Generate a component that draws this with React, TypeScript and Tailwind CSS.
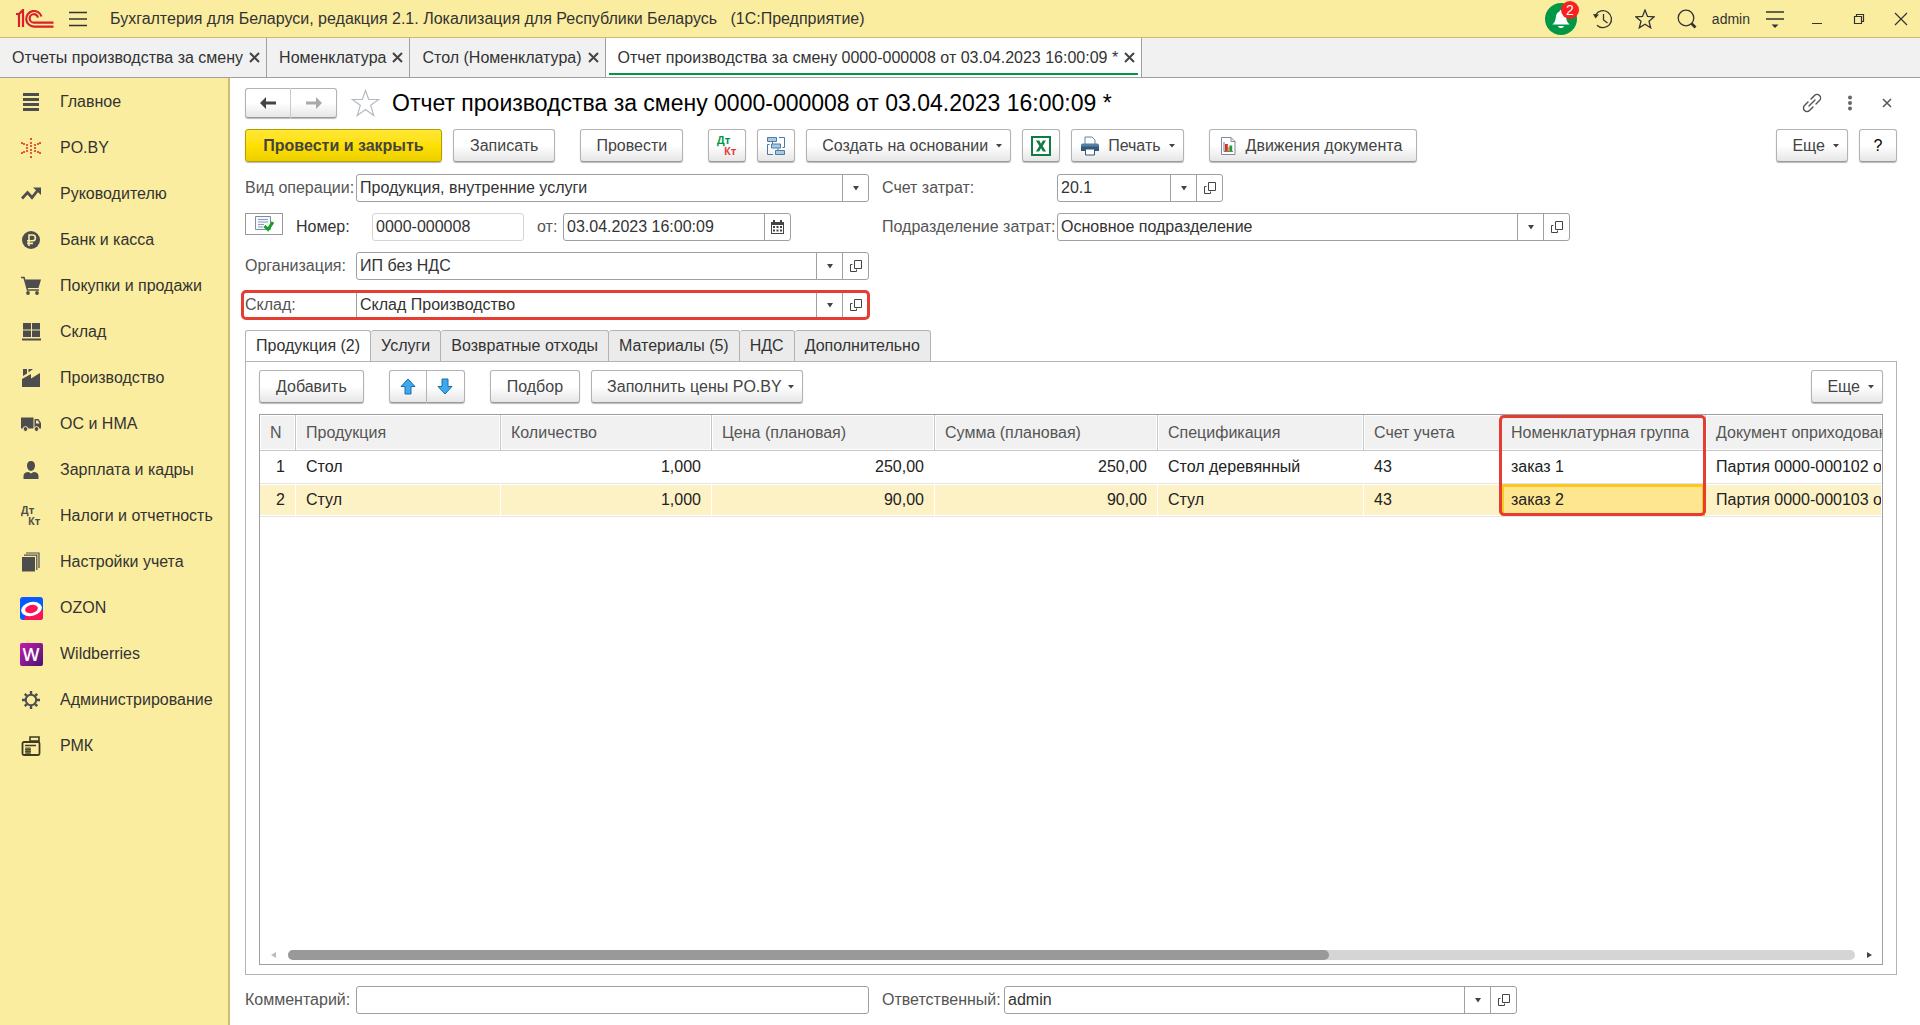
import { useState, type ReactNode } from "react";

const windowTabs = [
  "Отчеты производства за смену",
  "Номенклатура",
  "Стол (Номенклатура)",
  "Отчет производства за смену 0000-000008 от 03.04.2023 16:00:09 *",
];

const docTabs = [
  "Продукция (2)",
  "Услуги",
  "Возвратные отходы",
  "Материалы (5)",
  "НДС",
  "Дополнительно",
];

const rows = [
  {
    n: 1,
    product: "Стол",
    qty: "1,000",
    price: "250,00",
    sum: "250,00",
    spec: "Стол деревянный",
    account: "43",
    group: "заказ 1",
    doc: "Партия 0000-000102 от 03.04.2023",
  },
  {
    n: 2,
    product: "Стул",
    qty: "1,000",
    price: "90,00",
    sum: "90,00",
    spec: "Стул",
    account: "43",
    group: "заказ 2",
    doc: "Партия 0000-000103 от 03.04.2023",
  },
];

function Svg({ children }: { children: ReactNode }) {
  return (
    <svg width="20" height="20" viewBox="0 0 20 20" fill="none" aria-hidden>
      {children}
    </svg>
  );
}

function Logo() {
  return (
    <svg width="38" height="20" viewBox="0 0 38 20" fill="none" stroke="#d9202a" strokeWidth="2.2" aria-hidden>
      <path d="M0 5h3v13M3 5l4-4v17" />
      <path d="M25.500 7.500A7.800 7.800 0 1 0 18 17.600h19.500" />
      <path d="M22 8.600A4.200 4.200 0 1 0 18 13.600h19.500" />
    </svg>
  );
}

function DtKt({ dt, kt }: { dt: string; kt: string }) {
  return (
    <svg
      width="22"
      height="22"
      viewBox="0 0 22 22"
      className="overflow-visible font-['Open_Sans',sans-serif]"
      fontSize="10"
      fontWeight="700"
      aria-hidden
    >
      <text x="1" y="9" fill={dt}>Дт</text>
      <text x="8" y="20" fill={kt}>Кт</text>
    </svg>
  );
}

const poDots = [
  [10, 1], [10, 5], [10, 8], [10, 12], [10, 15], [10, 19], [1, 5], [19, 5], [1, 15], [19, 15],
  [6, 7], [14, 7], [6, 10], [14, 10], [6, 13], [14, 13], [3, 14], [17, 14], [3, 6], [17, 6],
];

const sections: { label: string; icon: ReactNode }[] = [
  {
    label: "Главное",
    icon: (
      <Svg>
        <path d="M2 2.5h16M2 7.5h16M2 12.5h16M2 17.5h16" stroke="#4d4d4d" strokeWidth="2.8" />
      </Svg>
    ),
  },
  {
    label: "PO.BY",
    icon: (
      <Svg>
        {poDots.map(([x, y]) => (
          <circle key={`${x}-${y}`} cx={x} cy={y} r="1.1" fill="#dd3a1d" />
        ))}
      </Svg>
    ),
  },
  {
    label: "Руководителю",
    icon: (
      <Svg>
        <path d="M1 14.5l5.5-6 4.5 5 6-7.5" stroke="#4d4d4d" strokeWidth="2.8" />
        <path d="M12 3.5h8V11z" fill="#4d4d4d" />
      </Svg>
    ),
  },
  {
    label: "Банк и касса",
    icon: (
      <Svg>
        <circle cx="10" cy="10" r="9" fill="#4d4d4d" />
        <path d="M8 16V5h3.5a2.8 2.8 0 0 1 0 5.8H6M6 13.4h6" stroke="#fbed9f" strokeWidth="1.6" />
      </Svg>
    ),
  },
  {
    label: "Покупки и продажи",
    icon: (
      <Svg>
        <path d="M0 1.5h3L6.5 14H18" stroke="#4d4d4d" strokeWidth="1.5" />
        <path d="M4 3.5h16L17.500 12H6z" fill="#4d4d4d" />
        <circle cx="7" cy="17" r="1.9" fill="#4d4d4d" />
        <circle cx="16" cy="17" r="1.9" fill="#4d4d4d" />
      </Svg>
    ),
  },
  {
    label: "Склад",
    icon: (
      <Svg>
        <path d="M2 1h8v6.500H2zM11 1h8v6.500h-8zM2 8.500h8V15H2zM11 8.500h8V15h-8zM1 16.500h19v2H1z" fill="#4d4d4d" />
      </Svg>
    ),
  },
  {
    label: "Производство",
    icon: (
      <Svg>
        <path d="M1 19v-8l9-5v4.500L19 5v14zM2 1h4v4.500L2 8zM7.500 1H12L7.500 4.500z" fill="#4d4d4d" />
      </Svg>
    ),
  },
  {
    label: "ОС и НМА",
    icon: (
      <Svg>
        <path d="M0 3.500h12.500v11H0zM13.500 5h4l2.500 4v5.500h-6.500z" fill="#4d4d4d" />
        <path d="M15 6.500h2l1.500 3H15z" fill="#fbed9f" />
        <circle cx="4.500" cy="15" r="2.400" fill="#4d4d4d" stroke="#fbed9f" />
        <circle cx="15.500" cy="15" r="2.400" fill="#4d4d4d" stroke="#fbed9f" />
      </Svg>
    ),
  },
  {
    label: "Зарплата и кадры",
    icon: (
      <Svg>
        <path
          d="M10 1c2.600 0 4 1.800 4 4.500S12.300 11 10 11 6 8.200 6 5.500 7.400 1 10 1zM2.500 19v-3c0-2.500 2-4 5-4l2.500 1.500 2.500-1.500c3 0 5 1.500 5 4v3z"
          fill="#4d4d4d"
        />
      </Svg>
    ),
  },
  { label: "Налоги и отчетность", icon: <DtKt dt="#4d4d4d" kt="#4d4d4d" /> },
  {
    label: "Настройки учета",
    icon: (
      <Svg>
        <path d="M1 5h13v14.500H1z" fill="#4d4d4d" />
        <path d="M3 3.200h12.800V18M5 1h13v15" stroke="#4d4d4d" strokeWidth="1.200" />
      </Svg>
    ),
  },
  {
    label: "OZON",
    icon: (
      <svg width="23" height="23" viewBox="0 0 23 23" aria-hidden>
        <clipPath id="ozon">
          <rect width="23" height="23" rx="3" />
        </clipPath>
        <g clipPath="url(#ozon)">
          <rect width="23" height="23" fill="#065bff" />
          <path d="M4 23l2-6 17-4v10z" fill="#f9145a" />
          <ellipse cx="11.500" cy="12" rx="10.500" ry="7" fill="#fff" transform="rotate(-14 11.500 12)" />
          <ellipse cx="11.500" cy="12" rx="6.500" ry="4" fill="#f9145a" transform="rotate(-14 11.500 12)" />
        </g>
      </svg>
    ),
  },
  {
    label: "Wildberries",
    icon: (
      <span className="flex size-[23px] items-center justify-center rounded-xs bg-linear-to-br from-[#cb11ab] to-[#481173] font-['Open_Sans',sans-serif] text-lg leading-none font-semibold text-white">
        W
      </span>
    ),
  },
  {
    label: "Администрирование",
    icon: (
      <Svg>
        <circle cx="10" cy="10" r="5.200" stroke="#4d4d4d" strokeWidth="2" />
        <path
          d="M10 1v3M10 16v3M1 10h3M16 10h3M3.800 3.800l2 2M14.200 14.200l2 2M3.800 16.200l2-2M14.200 5.800l2-2"
          stroke="#4d4d4d"
          strokeWidth="2.400"
        />
      </Svg>
    ),
  },
  {
    label: "РМК",
    icon: (
      <Svg>
        <rect x="1.500" y="6" width="17" height="13" rx="1.500" stroke="#3f3a22" strokeWidth="1.800" />
        <path d="M9 1h9v4H9zM13.500 5v2M4 9.500h11" stroke="#3f3a22" strokeWidth="1.600" />
        <path d="M4 11.500h6V18H4z" fill="#8d8556" />
        <path d="M4 13.500h6M4 15.500h6M6 11.500V18M8 11.500V18" stroke="#3f3a22" strokeWidth="0.700" />
      </Svg>
    ),
  },
];

function Caret() {
  return (
    <svg width="8" height="5" viewBox="0 0 8 5" aria-hidden>
      <path d="M1 0h6L4 4.500z" fill="#444" />
    </svg>
  );
}

function SmallCaret() {
  return (
    <svg width="6" height="4" viewBox="0 0 6 4" aria-hidden>
      <path d="M0 0h6L3 3.500z" fill="#444" />
    </svg>
  );
}

function OpenIcon() {
  return (
    <svg width="14" height="14" viewBox="0 0 14 14" fill="none" stroke="#444" aria-hidden>
      <path d="M5.500 1.500h7v8h-7zM3.500 5.500h-2v7h6v-2" />
    </svg>
  );
}

const btnCls =
  "flex h-[33px] shrink-0 items-center justify-center rounded-[3px] border border-[#b3b3b3] border-b-[#999] bg-linear-to-b from-white from-50% to-[#e6e6e6] text-base whitespace-nowrap text-[#444] shadow-[0_1px_1px_#bbb] hover:to-[#ddd]";

const fieldCls = "flex h-7 items-stretch rounded-[3px] border border-[#a0a0a0] bg-white";
const inputCls = "min-w-0 flex-1 bg-transparent px-[3px] text-base text-[#333] outline-none";
const partCls = "flex w-[26px] shrink-0 items-center justify-center border-l border-[#a0a0a0]";
const labelCls = "shrink-0 whitespace-nowrap text-[#555]";
const barBtnCls = "flex h-8 w-[42px] items-center justify-center";

type ComboProps = { id: string; value: string; className: string };

function Combo({ id, value, className }: ComboProps) {
  return (
    <div className={`${fieldCls} ${className}`}>
      <input id={id} type="text" defaultValue={value} className={inputCls} />
      <button type="button" className={partCls} aria-label="Выбрать">
        <Caret />
      </button>
      <button type="button" className={partCls} aria-label="Открыть">
        <OpenIcon />
      </button>
    </div>
  );
}

function TopBar() {
  return (
    <header className="flex h-[38px] items-center border-b border-[#c8bd6c] bg-[#fbed9f] pl-4">
      <Logo />
      <button type="button" className="ml-[15px]" aria-label="Меню">
        <svg width="18" height="18" viewBox="0 0 18 18" stroke="#333" strokeWidth="1.300" aria-hidden>
          <path d="M0 2.500h18M0 9h18M0 15.500h18" />
        </svg>
      </button>
      <h1 className="ml-[23px] text-base whitespace-pre text-[#333]">
        Бухгалтерия для Беларуси, редакция 2.1. Локализация для Республики Беларусь{"   "}(1С:Предприятие)
      </h1>
      <div className="-mr-0.5 ml-auto flex items-center">
        <button type="button" className={barBtnCls} aria-label="Уведомления">
          <span className="relative flex size-8 items-center justify-center rounded-full bg-[#009846]">
            <svg width="20" height="22" viewBox="0 0 20 22" fill="#fff" aria-hidden>
              <path d="M10 2c1 0 1.500.7 1.500 1.500C14 4.500 15 6.500 15.300 10c.3 3 1.200 4.500 3.200 6.500h-17C3.500 14.500 4.400 13 4.700 10 5 6.500 6 4.500 8.500 3.500 8.500 2.700 9 2 10 2zM7 18h6c-.5 1.500-1.500 2-3 2s-2.500-.5-3-2z" />
            </svg>
            <span className="absolute -top-0.5 -right-0.5 flex size-[18px] items-center justify-center rounded-full bg-[#fa2020] text-sm leading-none text-white">
              2
            </span>
          </span>
        </button>
        <button type="button" className={barBtnCls} aria-label="История">
          <svg width="20" height="20" viewBox="0 0 20 20" fill="none" stroke="#333" strokeWidth="1.300" aria-hidden>
            <path d="M2.600 6A8.500 8.500 0 1 1 4 16.200M10.500 5v6l4 3" />
            <path d="M0 5l6 .5-3.500 4z" fill="#333" stroke="none" />
          </svg>
        </button>
        <button type="button" className={barBtnCls} aria-label="Избранное">
          <svg width="20" height="20" viewBox="0 0 20 20" fill="none" stroke="#333" strokeWidth="1.300" aria-hidden>
            <path d="M10 1l2.500 6.500 6.500.4-5 4.300 1.700 6.600L10 15.200l-5.700 3.600L6 12.200 1 7.900l6.500-.4z" />
          </svg>
        </button>
        <button type="button" className={barBtnCls} aria-label="Поиск">
          <svg width="20" height="20" viewBox="0 0 20 20" fill="none" stroke="#333" strokeWidth="1.300" aria-hidden>
            <circle cx="9" cy="9" r="7.800" />
            <path d="M14.500 14.500l4 4" strokeWidth="2.600" />
          </svg>
        </button>
        <button type="button" className="px-1 text-sm text-[#333]">
          admin
        </button>
        <button type="button" className={barBtnCls} aria-label="Настройки">
          <svg width="18" height="20" viewBox="0 0 18 20" fill="none" stroke="#333" strokeWidth="1.300" aria-hidden>
            <path d="M0 3h18M0 10h18" />
            <path d="M5.500 15.500h7L9 19z" fill="#333" stroke="none" />
          </svg>
        </button>
        <button type="button" className={barBtnCls} aria-label="Свернуть">
          <svg width="12" height="12" viewBox="0 0 12 12" stroke="#333" aria-hidden>
            <path d="M1 10.500h10" />
          </svg>
        </button>
        <button type="button" className={barBtnCls} aria-label="Восстановить">
          <svg width="12" height="12" viewBox="0 0 12 12" fill="none" stroke="#333" strokeWidth="1.200" aria-hidden>
            <path d="M1.500 3.500h7v7h-7zM3.500 3.500v-2h7v7h-2" />
          </svg>
        </button>
        <button type="button" className={barBtnCls} aria-label="Закрыть">
          <svg width="14" height="14" viewBox="0 0 14 14" stroke="#333" strokeWidth="1.200" aria-hidden>
            <path d="M1 1l12 12M13 1L1 13" />
          </svg>
        </button>
      </div>
    </header>
  );
}

function WindowTabs() {
  return (
    <nav className="flex h-10 border-b border-[#a0a0a0] bg-[#f1f1f1]">
      {windowTabs.map((title, i) => {
        const active = i === windowTabs.length - 1;
        return (
          <div
            key={title}
            className={`relative flex items-center gap-1.5 border-r border-[#a0a0a0] pr-1.5 pl-3 ${active ? "bg-white" : ""}`}
          >
            <a href="#" className="text-base whitespace-nowrap text-[#333]">
              {title}
            </a>
            <button type="button" aria-label={`Закрыть: ${title}`}>
              <svg width="11" height="11" viewBox="0 0 11 11" stroke="#444" strokeWidth="2" aria-hidden>
                <path d="M1 1l9 9M10 1l-9 9" />
              </svg>
            </button>
            {active && <span className="absolute inset-x-[3px] bottom-0.5 h-0.5 bg-[#009846]" />}
          </div>
        );
      })}
    </nav>
  );
}

function Sidebar() {
  return (
    <aside className="w-[230px] shrink-0 border-r-2 border-[#cbbf78] bg-[#fbed9f] pt-px">
      {sections.map((s) => (
        <a key={s.label} href="#" className="flex h-[46px] items-center text-base text-[#333] hover:bg-[#f7e37a]">
          <span className="ml-4 flex w-[30px] shrink-0 items-center justify-center">{s.icon}</span>
          <span className="ml-3.5 whitespace-nowrap">{s.label}</span>
        </a>
      ))}
    </aside>
  );
}

function DocHeader() {
  return (
    <div className="flex h-[30px] items-center">
      <div className="flex">
        <button type="button" className={`${btnCls} h-[30px]! w-[46px] rounded-r-none border-r-[#ccc]`} aria-label="Назад">
          <svg width="18" height="14" viewBox="0 0 18 14" aria-hidden>
            <path d="M7 1L1 7l6 6V8.500h10v-3H7z" fill="#444" />
          </svg>
        </button>
        <button type="button" className={`${btnCls} h-[30px]! w-[46px] rounded-l-none border-l-0`} aria-label="Вперед">
          <svg width="18" height="14" viewBox="0 0 18 14" aria-hidden>
            <path d="M11 1l6 6-6 6V8.500H1v-3h10z" fill="#aaa" />
          </svg>
        </button>
      </div>
      <button type="button" className="ml-3.5" aria-label="В избранное">
        <svg width="29" height="28" viewBox="0 0 29 28" fill="#fff" stroke="#b4bac2" strokeWidth="1.200" aria-hidden>
          <path d="M14.500 1.500l3.200 9h10l-8 5.800 3 10.200-8.200-6-8.200 6 3-10.200-8-5.800h10z" />
        </svg>
      </button>
      <h2 className="ml-3 text-[23px] leading-[30px] whitespace-nowrap text-black">
        Отчет производства за смену 0000-000008 от 03.04.2023 16:00:09 *
      </h2>
      <div className="ml-auto flex items-center gap-[21px] pr-[5px]">
        <button type="button" aria-label="Получить ссылку">
          <svg width="20" height="20" viewBox="0 0 20 20" fill="none" stroke="#555" strokeWidth="1.400" strokeLinecap="round" aria-hidden>
            <path d="M7 13l6-6M9 6l3.500-3.600a3.500 3.500 0 0 1 5 5L14 11M11 14l-3.500 3.600a3.500 3.500 0 0 1-5-5L6 9" />
          </svg>
        </button>
        <button type="button" className="px-1" aria-label="Еще действия">
          <svg width="6" height="16" viewBox="0 0 6 16" fill="#666" aria-hidden>
            <circle cx="3" cy="2.500" r="2" />
            <circle cx="3" cy="8" r="2" />
            <circle cx="3" cy="13.500" r="2" />
          </svg>
        </button>
        <button type="button" className="pl-1" aria-label="Закрыть документ">
          <svg width="10" height="10" viewBox="0 0 10 10" stroke="#555" strokeWidth="1.500" aria-hidden>
            <path d="M1 1l8 8M9 1L1 9" />
          </svg>
        </button>
      </div>
    </div>
  );
}

function Toolbar() {
  return (
    <div className="mt-[11px] flex gap-[11px]">
      <button
        type="button"
        className="flex h-[33px] w-[197px] shrink-0 items-center justify-center rounded-[3px] border border-[#b39e00] bg-linear-to-b from-[#ffe833] via-[#ffe000] to-[#ecd000] text-base font-bold text-[#444] shadow-[0_1px_1px_#bbb]"
      >
        Провести и закрыть
      </button>
      <button type="button" className={`${btnCls} px-4`}>Записать</button>
      <button type="button" className={`${btnCls} ml-3.5 px-[15px]`}>Провести</button>
      <button type="button" className={`${btnCls} ml-3.5 w-[38px]`} aria-label="Проводки">
        <DtKt dt="#009846" kt="#e3403c" />
      </button>
      <button type="button" className={`${btnCls} w-[38px]`} aria-label="Структура подчиненности">
        <svg width="20" height="20" viewBox="0 0 20 20" fill="#a9c9e4" stroke="#4a7ba6" aria-hidden>
          <path d="M1.500 1.500h9v4h-9zM5.500 8h9v4h-9zM9.500 14.500h9v4h-9z" />
          <path d="M13 1.500h5.500v10h-2M3.500 8.500h-2v10H7M6.500 5.500V8M12 12v2.500" fill="none" />
        </svg>
      </button>
      <button type="button" className={`${btnCls} gap-2 pr-2 pl-[15px]`}>
        Создать на основании
        <SmallCaret />
      </button>
      <button type="button" className={`${btnCls} w-[38px]`} aria-label="Выгрузить в Excel">
        <svg width="20" height="20" viewBox="0 0 20 20" aria-hidden>
          <rect x="1" y="1" width="18" height="18" fill="#fff" stroke="#107c41" strokeWidth="2" />
          <path d="M5 4.500h3.200L10 7.800l1.900-3.300H15L11.700 10l3.400 5.500h-3.200L10 12.200l-1.900 3.300H4.900L8.300 10z" fill="#107c41" />
        </svg>
      </button>
      <button type="button" className={`${btnCls} gap-2 px-2`}>
        <svg width="20" height="20" viewBox="0 0 20 20" aria-hidden>
          <path d="M5 1h7l3 3v5H5z" fill="#fff" stroke="#6d8296" />
          <path d="M2.500 7.500h15A1.500 1.500 0 0 1 19 9v6H1V9a1.500 1.500 0 0 1 1.500-1.500z" fill="#5580a5" />
          <path d="M1 10.500h18V15H1z" fill="#33587b" />
          <path d="M5.500 13h9v6h-9z" fill="#fff" stroke="#33587b" />
        </svg>
        Печать
        <SmallCaret />
      </button>
      <button type="button" className={`${btnCls} ml-3.5 gap-2 pr-3.5 pl-2`}>
        <svg width="20" height="20" viewBox="0 0 20 20" fill="none" aria-hidden>
          <path d="M3.500 1.500H13l4 4v13H3.500z" fill="#fff" stroke="#7c8a99" />
          <path d="M13 1.500v4h4" stroke="#7c8a99" />
          <path d="M6 6v9.500h9" stroke="#555" strokeWidth="0.800" />
          <path d="M7 8h2.800v7H7z" fill="#d92b2b" />
          <path d="M9.800 11h1.600v4H9.800z" fill="#e8a020" />
          <path d="M11.400 9.500h2.800V15h-2.800z" fill="#27963c" />
        </svg>
        Движения документа
      </button>
      <button type="button" className={`${btnCls} ml-auto gap-2 pr-2 pl-[15px]`}>
        Еще
        <SmallCaret />
      </button>
      <button type="button" className={`${btnCls} w-[38px] text-black`}>?</button>
    </div>
  );
}

function DocForm() {
  return (
    <div className="mt-3 flex gap-[13px] text-base">
      <div className="flex w-[624px] shrink-0 flex-col gap-[11px]">
        <div className="flex items-center">
          <label htmlFor="operation" className={`${labelCls} w-[111px]`}>Вид операции:</label>
          <div className={`${fieldCls} relative flex-1`}>
            <select id="operation" className={`${inputCls} appearance-none`}>
              <option>Продукция, внутренние услуги</option>
            </select>
            <span className={`${partCls} pointer-events-none absolute inset-y-0 right-0`}>
              <Caret />
            </span>
          </div>
        </div>
        <div className="flex items-center">
          <button
            type="button"
            className="flex h-[22px] w-[38px] items-center justify-center self-start border border-[#999] bg-white"
            aria-label="Проведен"
          >
            <svg width="20" height="16" viewBox="0 0 20 16" fill="none" aria-hidden>
              <path d="M1.500.5h15v13h-15z" fill="#f4f8fc" stroke="#7a8fa6" />
              <path d="M4 3.500h10M4 6h10M4 8.500h6M4 11h5" stroke="#8d9db0" />
              <path d="M10.500 10l3.500 3.500L19 6" stroke="#16a022" strokeWidth="3" />
            </svg>
          </button>
          <label htmlFor="number" className="ml-[13px] w-[76px] shrink-0 text-[#333]">Номер:</label>
          <input
            id="number"
            type="text"
            defaultValue="0000-000008"
            className="h-7 w-[152px] rounded-[3px] border border-[#d5d5d5] px-[3px] text-[#333] outline-none"
          />
          <label htmlFor="date" className={`${labelCls} ml-[13px] w-[26px]`}>от:</label>
          <div className={`${fieldCls} w-[228px]`}>
            <input id="date" type="text" defaultValue="03.04.2023 16:00:09" className={inputCls} />
            <button type="button" className={partCls} aria-label="Календарь">
              <svg width="13" height="14" viewBox="0 0 13 14" fill="#444" aria-hidden>
                <path d="M0 2h2V0h2v2h5V0h2v2h2v12H0zM1 5v8h11V5z" fillRule="evenodd" />
                <path d="M2 6h2v2H2zM5.500 6h2v2h-2zM9 6h2v2H9zM2 9.500h2v2H2zM5.500 9.500h2v2h-2zM9 9.500h2v2H9z" />
              </svg>
            </button>
          </div>
        </div>
        <div className="flex items-center">
          <label htmlFor="org" className={`${labelCls} w-[111px]`}>Организация:</label>
          <Combo id="org" value="ИП без НДС" className="flex-1" />
        </div>
        <div className="relative flex items-center">
          <label htmlFor="store" className={`${labelCls} w-[111px]`}>Склад:</label>
          <Combo id="store" value="Склад Производство" className="flex-1" />
          <span className="pointer-events-none absolute -inset-y-px -right-px -left-1 rounded-[5px] border-3 border-[#e63c32]" />
        </div>
      </div>
      <div className="flex flex-col gap-[11px]">
        <div className="flex items-center">
          <label htmlFor="account" className={`${labelCls} w-[175px]`}>Счет затрат:</label>
          <Combo id="account" value="20.1" className="w-[166px]" />
        </div>
        <div className="flex items-center">
          <label htmlFor="dept" className={`${labelCls} w-[175px]`}>Подразделение затрат:</label>
          <Combo id="dept" value="Основное подразделение" className="w-[513px]" />
        </div>
      </div>
    </div>
  );
}

const thCls =
  "h-9 border-r border-b border-[#c8c8c8] bg-[#f1f1f1] px-2.5 text-left font-normal text-[#555] shadow-[inset_0_0_0_1px_#fff]";

function ProductTable() {
  const [selected, setSelected] = useState(2);

  return (
    <div className="mt-[11px] flex flex-1 flex-col overflow-hidden border border-[#a0a0a0]">
      <div className="flex-1 overflow-hidden">
        <table className="w-full min-w-[1622px] table-fixed border-separate border-spacing-0 text-base whitespace-nowrap">
          <colgroup>
            <col className="w-9" />
            <col className="w-[205px]" />
            <col className="w-[211px]" />
            <col className="w-[223px]" />
            <col className="w-[223px]" />
            <col className="w-[206px]" />
            <col className="w-[137px]" />
            <col className="w-[205px]" />
            <col />
          </colgroup>
          <thead>
            <tr>
              <th className={thCls}>N</th>
              <th className={thCls}>Продукция</th>
              <th className={thCls}>Количество</th>
              <th className={thCls}>Цена (плановая)</th>
              <th className={thCls}>Сумма (плановая)</th>
              <th className={thCls}>Спецификация</th>
              <th className={thCls}>Счет учета</th>
              <th className={`${thCls} relative`}>
                Номенклатурная группа
                <span className="pointer-events-none absolute top-0 -right-px -left-0.5 z-10 h-[101px] rounded-[5px] border-3 border-[#e63c32]" />
              </th>
              <th className={`${thCls} overflow-hidden border-r-0`}>Документ оприходования</th>
            </tr>
          </thead>
          <tbody>
            {rows.map((r) => {
              const on = r.n === selected;
              const td = `h-[33px] border-b border-b-[#e4e4e4] px-2.5 text-[#222] ${
                on
                  ? "border-r border-r-white bg-[#fdf2c6] shadow-[inset_0_1px_0_#fff,inset_0_-1px_0_#fff]"
                  : "border-r border-r-transparent"
              }`;
              return (
                <tr key={r.n} onClick={() => setSelected(r.n)}>
                  <td className={`${td} text-right`}>{r.n}</td>
                  <td className={td}>{r.product}</td>
                  <td className={`${td} text-right`}>{r.qty}</td>
                  <td className={`${td} text-right`}>{r.price}</td>
                  <td className={`${td} text-right`}>{r.sum}</td>
                  <td className={td}>{r.spec}</td>
                  <td className={td}>{r.account}</td>
                  <td className={`${td} ${on ? "bg-[#fee690]! shadow-[inset_0_0_0_3px_#fbc91f]!" : ""}`}>{r.group}</td>
                  <td className={`${td} overflow-hidden`}>{r.doc}</td>
                </tr>
              );
            })}
          </tbody>
        </table>
      </div>
      <div className="mb-1 flex h-2.5 items-center pr-2.5 pl-[11px]">
        <button type="button" aria-label="Прокрутить влево">
          <svg width="5" height="8" viewBox="0 0 5 8" aria-hidden>
            <path d="M5 1v6L0 4z" fill="#bbb" />
          </svg>
        </button>
        <div className="mx-3 h-2.5 flex-1 rounded-full bg-[#d5d5d5]">
          <div className="h-2.5 w-[1041px] max-w-2/3 rounded-full bg-[#999]" />
        </div>
        <button type="button" aria-label="Прокрутить вправо">
          <svg width="5" height="8" viewBox="0 0 5 8" aria-hidden>
            <path d="M0 1v6l5-3z" fill="#444" />
          </svg>
        </button>
      </div>
    </div>
  );
}

function DocTabs() {
  const [tab, setTab] = useState(0);

  return (
    <section className="mt-[11px] flex flex-1 flex-col">
      <div className="flex" role="tablist">
        {docTabs.map((title, i) => (
          <button
            key={title}
            type="button"
            role="tab"
            aria-selected={i === tab}
            onClick={() => setTab(i)}
            className={`-mb-px h-8 rounded-t-[3px] border border-[#b3b3b3] px-2.5 text-base whitespace-nowrap text-[#333] ${
              i === tab ? "border-b-white bg-white" : "bg-[#ebebeb]"
            } ${i > 0 ? "border-l-0" : ""}`}
          >
            {title}
          </button>
        ))}
      </div>
      <div className="flex flex-1 flex-col border border-[#b3b3b3] px-[13px] pt-2 pb-[9px]">
        <div className="flex gap-[11px]">
          <button type="button" className={`${btnCls} px-4`}>Добавить</button>
          <div className="ml-3.5 flex">
            <button type="button" className={`${btnCls} w-[38px] rounded-r-none`} aria-label="Переместить вверх">
              <svg width="16" height="17" viewBox="0 0 16 17" aria-hidden>
                <path d="M8 1l7 7.500h-4V16H5V8.500H1z" fill="#3fa9f0" stroke="#1c6ea8" />
              </svg>
            </button>
            <button type="button" className={`${btnCls} w-[38px] rounded-l-none border-l-0`} aria-label="Переместить вниз">
              <svg width="16" height="17" viewBox="0 0 16 17" aria-hidden>
                <path d="M8 16l7-7.500h-4V1H5v7.500H1z" fill="#3fa9f0" stroke="#1c6ea8" />
              </svg>
            </button>
          </div>
          <button type="button" className={`${btnCls} ml-3.5 px-4`}>Подбор</button>
          <button type="button" className={`${btnCls} gap-1.5 pr-2 pl-[15px]`}>
            Заполнить цены PO.BY
            <SmallCaret />
          </button>
          <button type="button" className={`${btnCls} ml-auto gap-2 pr-2 pl-[15px]`}>
            Еще
            <SmallCaret />
          </button>
        </div>
        <ProductTable />
      </div>
    </section>
  );
}

function DocFooter() {
  return (
    <footer className="mt-[11px] flex items-center text-base">
      <label htmlFor="comment" className={`${labelCls} w-[111px]`}>Комментарий:</label>
      <input
        id="comment"
        type="text"
        className="h-7 w-[513px] rounded-[3px] border border-[#a0a0a0] px-[3px] outline-none"
      />
      <label htmlFor="owner" className={`${labelCls} ml-[13px] w-[122px]`}>Ответственный:</label>
      <Combo id="owner" value="admin" className="w-[513px]" />
    </footer>
  );
}

export default function App() {
  return (
    <div className="flex min-h-screen flex-col bg-white font-['Liberation_Sans',Arial,sans-serif]">
      <TopBar />
      <WindowTabs />
      <div className="flex flex-1">
        <Sidebar />
        <main className="flex min-w-0 flex-1 flex-col pt-2.5 pr-[23px] pb-[11px] pl-[15px]">
          <DocHeader />
          <Toolbar />
          <DocForm />
          <DocTabs />
          <DocFooter />
        </main>
      </div>
    </div>
  );
}
